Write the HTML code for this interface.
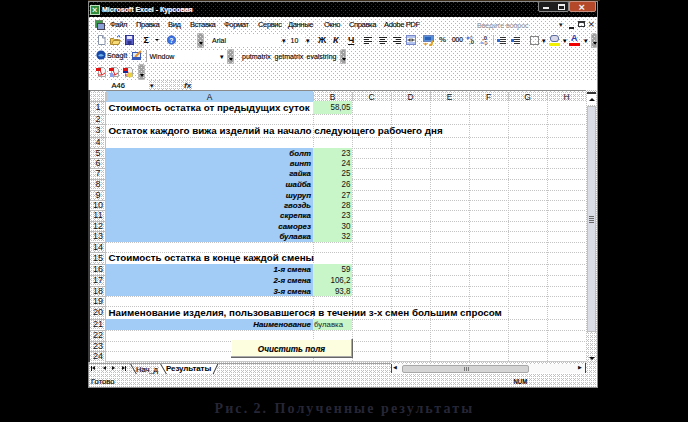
<!DOCTYPE html><html><head><meta charset="utf-8"><style>
html,body{margin:0;padding:0}
body{width:688px;height:422px;background:#000;position:relative;overflow:hidden;font-family:"Liberation Sans",sans-serif}
div{box-sizing:border-box}
.t{position:absolute;white-space:nowrap;line-height:1}
.b{font-weight:bold;font-size:9.8px;color:#000}
.bi{font-weight:bold;font-style:italic;font-size:7.9px;color:#000;-webkit-text-stroke:0.1px #000}
.n{font-size:8px;color:#111;transform:scaleY(1.12);transform-origin:50% 60%}
.m{font-size:7.6px;letter-spacing:-0.4px;color:#000;-webkit-text-stroke:0.1px #000}
.tb{font-size:7px;color:#000;-webkit-text-stroke:0.1px #000}
.grip{position:absolute;width:7px;background:conic-gradient(from 270deg at 1px 1px,#e8e8e8 0 25%,transparent 0) 0px 0px/4px 4px,conic-gradient(from 270deg at 1px 1px,#e8e8e8 0 25%,transparent 0) 2px 2px/4px 4px,#a0a0a0;border:1px solid #b8b8b8;border-radius:2px 2px 1px 1px}.grip:after{content:'';position:absolute;left:1px;bottom:2px;border-left:2px solid transparent;border-right:2px solid transparent;border-top:3px solid #000}
.ds{background:conic-gradient(from 270deg at 1px 1px,#b4b4b4 0 25%,transparent 0) 0px 0px/4px 4px,conic-gradient(from 270deg at 1px 1px,#b4b4b4 0 25%,transparent 0) 2px 2px/4px 4px,#fff}
.dx{background:conic-gradient(from 270deg at 1px 1px,#c0c0c0 0 25%,transparent 0) 0px 0px/4px 4px,conic-gradient(from 270deg at 1px 1px,#c0c0c0 0 25%,transparent 0) 2px 0px/4px 4px,conic-gradient(from 270deg at 1px 1px,#c0c0c0 0 25%,transparent 0) 1px 1px/4px 4px,conic-gradient(from 270deg at 1px 1px,#c0c0c0 0 25%,transparent 0) 0px 2px/4px 4px,conic-gradient(from 270deg at 1px 1px,#c0c0c0 0 25%,transparent 0) 2px 2px/4px 4px,#fff}
.dk{background:conic-gradient(from 270deg at 1px 1px,#3c3c3c 0 25%,transparent 0) 0px 0px/4px 4px,conic-gradient(from 270deg at 1px 1px,#262626 0 25%,transparent 0) 2px 2px/4px 4px,#000}
</style></head><body>
<div style="position:absolute;left:88px;top:0px;width:512px;height:1px;background:#3a2a18"></div>
<div style="position:absolute;left:88px;top:1px;width:510px;height:387px;background:#8c8c8c"></div>
<div class="dk" style="position:absolute;left:89px;top:2px;width:508px;height:15px;"></div>
<div style="position:absolute;left:90px;top:5px;width:10px;height:10px;background:#2f8a3a;border:1px solid #bfe0bf"></div>
<div class="t " style="left:92px;top:5.5px;font-size:9px;font-weight:bold;color:#e8f4e8">×</div>
<div class="t " style="left:102px;top:6px;font-size:7px;font-weight:bold;color:#fff;-webkit-text-stroke:0.2px #fff">Microsoft Excel - Курсовая</div>
<div style="position:absolute;left:538px;top:1px;width:31px;height:11px;background:#1e1e1e;border:1px solid #8a8a8a;border-radius:2px"></div>
<div style="position:absolute;left:543px;top:7px;width:6px;height:2px;background:#eee"></div>
<div style="position:absolute;left:558px;top:4px;width:7px;height:6px;border:1px solid #eee;border-top-width:2px"></div>
<div style="position:absolute;left:569px;top:1px;width:27px;height:11px;background:#b4492a;border:1px solid #c89080;border-radius:2px"></div>
<div class="t " style="left:578.5px;top:1.5px;font-size:11px;font-weight:bold;color:#f4f4f4">×</div>
<div class="ds" style="position:absolute;left:89px;top:17px;width:508px;height:63px;"></div>
<div class="t m" style="left:110px;top:21px;">Файл</div>
<div class="t m" style="left:136px;top:21px;">Правка</div>
<div class="t m" style="left:168px;top:21px;">Вид</div>
<div class="t m" style="left:190px;top:21px;">Вставка</div>
<div class="t m" style="left:224px;top:21px;">Формат</div>
<div class="t m" style="left:258px;top:21px;">Сервис</div>
<div class="t m" style="left:288px;top:21px;">Данные</div>
<div class="t m" style="left:324px;top:21px;">Окно</div>
<div class="t m" style="left:349px;top:21px;">Справка</div>
<div class="t m" style="left:384px;top:21px;">Adobe PDF</div>
<div style="position:absolute;left:95px;top:20px;width:8px;height:8px;background:#3b9a4a;border:1px solid #6a8a6a"></div>
<div style="position:absolute;left:97px;top:23px;width:8px;height:7px;background:#8aa0d8;border:1px solid #445"></div>
<div class="t " style="left:477px;top:21.5px;font-size:7px;color:#8a8a8a">Введите вопрос</div>
<div class="t " style="left:559px;top:21px;font-size:7px;color:#222">▾</div>
<div style="position:absolute;left:569px;top:27px;width:5px;height:2px;background:#222"></div>
<div style="position:absolute;left:578px;top:21px;width:7px;height:6px;border:1px solid #333;border-top-width:2px"></div>
<div class="t " style="left:588px;top:19px;font-size:11px;color:#222">×</div>
<svg style="position:absolute;left:97px;top:35px" width="9" height="10" viewBox="0 0 9 10"><path d="M1.5 0.5h4l2.5 2.5v6.5h-6.5z" fill="#fff" stroke="#8a94a8"/><path d="M5.5 0.5v2.5h2.5" fill="#dde" stroke="#8a94a8"/></svg>
<svg style="position:absolute;left:110px;top:35px" width="11" height="10" viewBox="0 0 11 10"><path d="M0.5 3.5h3l1 1h4v5h-8z" fill="#f0c850" stroke="#b08a30"/><path d="M1.5 9.5l2-4h7l-2 4z" fill="#f8dc78" stroke="#b08a30"/><path d="M7 2l2-1.5 1 2" stroke="#3a6ad8" fill="none"/></svg>
<svg style="position:absolute;left:125px;top:35px" width="9" height="10" viewBox="0 0 9 10"><rect x="0.5" y="0.5" width="8" height="9" fill="#5a60c8" stroke="#30348a"/><rect x="2" y="1" width="5" height="3" fill="#e8e8f8"/><rect x="2.5" y="6" width="4" height="3" fill="#30348a"/></svg>
<div class="t " style="left:143.5px;top:36px;font-size:9px;font-weight:bold;color:#000">Σ</div>
<div style="position:absolute;left:155px;top:39px;width:0px;height:0px;border-left:2px solid transparent;border-right:2px solid transparent;border-top:2px solid #000"></div>
<svg style="position:absolute;left:167px;top:35px" width="9" height="10" viewBox="0 0 9 10"><circle cx="4.5" cy="5" r="4.3" fill="#3a70e0" stroke="#2850b0" stroke-width="0.6"/><text x="4.5" y="8" font-size="7" font-weight="bold" text-anchor="middle" fill="#fff" font-family="Liberation Sans">?</text></svg>
<div class="grip" style="left:197px;top:33px;height:15px"></div>
<div style="position:absolute;left:209px;top:34px;width:72px;height:12px;background:#fff"></div>
<div class="t tb" style="left:212px;top:37px;">Arial</div>
<div class="t tb" style="left:282px;top:37px;">▾</div>
<div style="position:absolute;left:289px;top:34px;width:16px;height:12px;background:#fff"></div>
<div class="t tb" style="left:290.5px;top:37px;">10</div>
<div class="t tb" style="left:306px;top:37px;">▾</div>
<div class="t " style="left:318px;top:35.5px;font-size:9px;font-weight:bold;color:#111">Ж</div>
<div class="t " style="left:333px;top:35.5px;font-size:9px;font-weight:bold;font-style:italic;color:#111">К</div>
<div class="t " style="left:348px;top:35.5px;font-size:9px;font-weight:bold;color:#111;text-decoration:underline">Ч</div>
<div style="position:absolute;left:364px;top:37px;width:8px;height:1px;background:#222"></div>
<div style="position:absolute;left:364px;top:39px;width:5px;height:1px;background:#222"></div>
<div style="position:absolute;left:364px;top:41px;width:8px;height:1px;background:#222"></div>
<div style="position:absolute;left:364px;top:43px;width:5px;height:1px;background:#222"></div>
<div style="position:absolute;left:379px;top:37px;width:8px;height:1px;background:#222"></div>
<div style="position:absolute;left:380px;top:39px;width:5px;height:1px;background:#222"></div>
<div style="position:absolute;left:379px;top:41px;width:8px;height:1px;background:#222"></div>
<div style="position:absolute;left:380px;top:43px;width:5px;height:1px;background:#222"></div>
<div style="position:absolute;left:393px;top:37px;width:8px;height:1px;background:#222"></div>
<div style="position:absolute;left:396px;top:39px;width:5px;height:1px;background:#222"></div>
<div style="position:absolute;left:393px;top:41px;width:8px;height:1px;background:#222"></div>
<div style="position:absolute;left:396px;top:43px;width:5px;height:1px;background:#222"></div>
<svg style="position:absolute;left:406px;top:35px" width="10" height="10" viewBox="0 0 10 10"><rect x="0.5" y="0.5" width="9" height="9" fill="#b4c4f0" stroke="#7888c8"/><rect x="1" y="3" width="8" height="4" fill="#fff"/><path d="M1.5 5h2.5M8.5 5h-2.5" stroke="#111" stroke-width="1.2"/><path d="M4 3.5v3M6 3.5v3" stroke="#111"/></svg>
<svg style="position:absolute;left:423px;top:35px" width="11" height="11" viewBox="0 0 11 11"><rect x="0.5" y="0.5" width="10" height="6" fill="#5a90d8" stroke="#6a80b8"/><rect x="2" y="2" width="6" height="3" fill="#2a60b8"/><path d="M6 10.5q3 0 3-3v-2" stroke="#e0a020" stroke-width="2" fill="none"/><circle cx="2.5" cy="9" r="1.3" fill="#e8a030"/></svg>
<div class="t " style="left:439px;top:36px;font-size:8px;font-weight:bold;color:#333">%</div>
<div class="t " style="left:452px;top:37px;font-size:6.5px;color:#111;-webkit-text-stroke:0.2px #111">000</div>
<svg style="position:absolute;left:466px;top:35px" width="10" height="10" viewBox="0 0 10 10"><text x="3" y="9" font-size="6" font-weight="bold" fill="#333" font-family="Liberation Sans">,0</text><path d="M0.5 3h3M2 1.5v3" stroke="#2a5ad8"/><text x="4" y="4.5" font-size="4.5" fill="#333" font-family="Liberation Sans">0</text></svg>
<svg style="position:absolute;left:480px;top:35px" width="10" height="10" viewBox="0 0 10 10"><text x="2" y="5" font-size="6" font-weight="bold" fill="#333" font-family="Liberation Sans">,0</text><path d="M0.5 8h3" stroke="#2a5ad8"/><text x="4.5" y="9.5" font-size="5" fill="#333" font-family="Liberation Sans">0</text></svg>
<div style="position:absolute;left:493px;top:35px;width:1px;height:11px;background:#bbb"></div>
<div style="position:absolute;left:500px;top:37px;width:6px;height:1px;background:#333"></div>
<div style="position:absolute;left:500px;top:39px;width:6px;height:1px;background:#333"></div>
<div style="position:absolute;left:500px;top:41px;width:6px;height:1px;background:#333"></div>
<div style="position:absolute;left:500px;top:43px;width:6px;height:1px;background:#333"></div>
<div style="position:absolute;left:497px;top:39px;width:3px;height:3px;background:#2a6ad8"></div>
<div style="position:absolute;left:514px;top:37px;width:6px;height:1px;background:#333"></div>
<div style="position:absolute;left:514px;top:39px;width:6px;height:1px;background:#333"></div>
<div style="position:absolute;left:514px;top:41px;width:6px;height:1px;background:#333"></div>
<div style="position:absolute;left:514px;top:43px;width:6px;height:1px;background:#333"></div>
<div style="position:absolute;left:511px;top:39px;width:3px;height:3px;background:#2a6ad8"></div>
<div style="position:absolute;left:530px;top:36px;width:9px;height:9px;border:1px solid #888"></div>
<div class="t tb" style="left:542px;top:37px;">▾</div>
<div style="position:absolute;left:550px;top:35px;width:9px;height:7px;background:#d8d8e8;border:1px solid #5a6a9a;border-radius:3px"></div>
<div style="position:absolute;left:549px;top:43px;width:11px;height:3px;background:#f0f000"></div>
<div class="t tb" style="left:563px;top:37px;">▾</div>
<div class="t " style="left:571px;top:34px;font-size:9px;font-weight:bold;color:#2a3ab0">A</div>
<div style="position:absolute;left:569px;top:43px;width:11px;height:3px;background:#f00000"></div>
<div class="t tb" style="left:584px;top:37px;">▾</div>
<div class="grip" style="left:591px;top:33px;height:15px;width:6px"></div>
<svg style="position:absolute;left:96px;top:50px" width="10" height="10" viewBox="0 0 10 10"><circle cx="5" cy="5" r="4.6" fill="#1a4aa8"/><path d="M2 5.5q3-3 6 0q-3 2-6 0z" fill="#6ab0e8"/></svg>
<div class="t tb" style="left:107px;top:52px;">SnagIt</div>
<svg style="position:absolute;left:132px;top:50px" width="11" height="10" viewBox="0 0 11 10"><rect x="0.5" y="2.5" width="8" height="7" fill="#e8eef8" stroke="#3a5ab8"/><path d="M3 7l6-6" stroke="#e09030" stroke-width="2"/><rect x="1" y="7" width="7" height="2" fill="#3a5ab8"/></svg>
<div style="position:absolute;left:146px;top:50px;width:1px;height:12px;background:#aaa"></div>
<div style="position:absolute;left:147px;top:51px;width:79px;height:12px;background:#fff"></div>
<div class="t " style="left:149.5px;top:53px;font-size:7px;color:#000;-webkit-text-stroke:0.1px #000">Window</div>
<div class="t tb" style="left:220px;top:53px;">▾</div>
<div class="grip" style="left:227px;top:49px;height:15px"></div>
<div class="t tb" style="left:242px;top:53px;">putmatrix</div>
<div class="t tb" style="left:274.5px;top:53px;">getmatrix</div>
<div class="t tb" style="left:306.5px;top:53px;">evalstring</div>
<div class="grip" style="left:340px;top:49px;height:15px;width:6px"></div>
<svg style="position:absolute;left:96px;top:66px" width="11" height="12" viewBox="0 0 11 12">
<path d="M2.5 1.5h5l2 2v7h-7z" fill="#f6f6f6" stroke="#a8a8a8"/>
<rect x="0" y="2" width="5" height="3" fill="#e01010"/>
<path d="M4 4l2 5M6 9l3-2M6 9l-4 0" stroke="#e02020" stroke-width="1" fill="none"/>
</svg>
<svg style="position:absolute;left:109px;top:66px" width="11" height="12" viewBox="0 0 11 12">
<path d="M2.5 1.5h5l2 2v7h-7z" fill="#f6f6f6" stroke="#a8a8a8"/>
<rect x="0" y="2" width="5" height="3" fill="#e01010"/>
<path d="M4 4l2 5M6 9l3-2M6 9l-4 0" stroke="#e02020" stroke-width="1" fill="none"/>
<rect x="1" y="7" width="3" height="4" fill="#8aa0e8"/></svg>
<svg style="position:absolute;left:123px;top:66px" width="11" height="12" viewBox="0 0 11 12">
<path d="M2.5 1.5h5l2 2v7h-7z" fill="#f6f6f6" stroke="#a8a8a8"/>
<rect x="0" y="2" width="5" height="3" fill="#e01010"/>
<path d="M4 4l2 5M6 9l3-2M6 9l-4 0" stroke="#e02020" stroke-width="1" fill="none"/>
<rect x="0" y="5" width="5" height="2" fill="#1a2a9a"/><circle cx="7" cy="9" r="2.5" fill="#e8d040"/></svg>
<div class="grip" style="left:138px;top:64px;height:16px"></div>
<div class="dx" style="position:absolute;left:89px;top:80px;width:508px;height:11px;"></div>
<div style="position:absolute;left:89px;top:80px;width:59px;height:10px;background:#fff"></div>
<div style="position:absolute;left:192px;top:80px;width:405px;height:10px;background:#fff"></div>
<div class="t " style="left:111.5px;top:82px;font-size:7.5px;color:#000;-webkit-text-stroke:0.15px #000">A46</div>
<div class="t " style="left:150px;top:82px;font-size:7px;color:#111">▾</div>
<div class="t " style="left:184px;top:81.5px;font-size:8px;font-weight:bold;color:#222"><i>f</i>x</div>
<div class="dx" style="position:absolute;left:89px;top:90px;width:508px;height:297px;"></div>
<div style="position:absolute;left:106px;top:91px;width:207px;height:11px;background:#a8cff4"></div>
<div style="position:absolute;left:106px;top:102px;width:480px;height:260px;background:#fff"></div>
<div style="position:absolute;left:313px;top:102px;width:1px;height:260px;background:repeating-linear-gradient(180deg,#c4c4c4 0 1px,transparent 1px 2px)"></div>
<div style="position:absolute;left:352px;top:102px;width:1px;height:260px;background:repeating-linear-gradient(180deg,#c4c4c4 0 1px,transparent 1px 2px)"></div>
<div style="position:absolute;left:391px;top:102px;width:1px;height:260px;background:repeating-linear-gradient(180deg,#c4c4c4 0 1px,transparent 1px 2px)"></div>
<div style="position:absolute;left:430px;top:102px;width:1px;height:260px;background:repeating-linear-gradient(180deg,#c4c4c4 0 1px,transparent 1px 2px)"></div>
<div style="position:absolute;left:469px;top:102px;width:1px;height:260px;background:repeating-linear-gradient(180deg,#c4c4c4 0 1px,transparent 1px 2px)"></div>
<div style="position:absolute;left:508px;top:102px;width:1px;height:260px;background:repeating-linear-gradient(180deg,#c4c4c4 0 1px,transparent 1px 2px)"></div>
<div style="position:absolute;left:547px;top:102px;width:1px;height:260px;background:repeating-linear-gradient(180deg,#c4c4c4 0 1px,transparent 1px 2px)"></div>
<div style="position:absolute;left:586px;top:102px;width:1px;height:260px;background:repeating-linear-gradient(180deg,#c4c4c4 0 1px,transparent 1px 2px)"></div>
<div style="position:absolute;left:106px;top:114px;width:480px;height:1px;background:repeating-linear-gradient(90deg,#c4c4c4 0 1px,transparent 1px 2px)"></div>
<div style="position:absolute;left:106px;top:124px;width:480px;height:1px;background:repeating-linear-gradient(90deg,#c4c4c4 0 1px,transparent 1px 2px)"></div>
<div style="position:absolute;left:106px;top:137px;width:480px;height:1px;background:repeating-linear-gradient(90deg,#c4c4c4 0 1px,transparent 1px 2px)"></div>
<div style="position:absolute;left:106px;top:148px;width:480px;height:1px;background:repeating-linear-gradient(90deg,#c4c4c4 0 1px,transparent 1px 2px)"></div>
<div style="position:absolute;left:106px;top:158px;width:480px;height:1px;background:repeating-linear-gradient(90deg,#c4c4c4 0 1px,transparent 1px 2px)"></div>
<div style="position:absolute;left:106px;top:168px;width:480px;height:1px;background:repeating-linear-gradient(90deg,#c4c4c4 0 1px,transparent 1px 2px)"></div>
<div style="position:absolute;left:106px;top:179px;width:480px;height:1px;background:repeating-linear-gradient(90deg,#c4c4c4 0 1px,transparent 1px 2px)"></div>
<div style="position:absolute;left:106px;top:190px;width:480px;height:1px;background:repeating-linear-gradient(90deg,#c4c4c4 0 1px,transparent 1px 2px)"></div>
<div style="position:absolute;left:106px;top:200px;width:480px;height:1px;background:repeating-linear-gradient(90deg,#c4c4c4 0 1px,transparent 1px 2px)"></div>
<div style="position:absolute;left:106px;top:210px;width:480px;height:1px;background:repeating-linear-gradient(90deg,#c4c4c4 0 1px,transparent 1px 2px)"></div>
<div style="position:absolute;left:106px;top:221px;width:480px;height:1px;background:repeating-linear-gradient(90deg,#c4c4c4 0 1px,transparent 1px 2px)"></div>
<div style="position:absolute;left:106px;top:231px;width:480px;height:1px;background:repeating-linear-gradient(90deg,#c4c4c4 0 1px,transparent 1px 2px)"></div>
<div style="position:absolute;left:106px;top:242px;width:480px;height:1px;background:repeating-linear-gradient(90deg,#c4c4c4 0 1px,transparent 1px 2px)"></div>
<div style="position:absolute;left:106px;top:252px;width:480px;height:1px;background:repeating-linear-gradient(90deg,#c4c4c4 0 1px,transparent 1px 2px)"></div>
<div style="position:absolute;left:106px;top:264px;width:480px;height:1px;background:repeating-linear-gradient(90deg,#c4c4c4 0 1px,transparent 1px 2px)"></div>
<div style="position:absolute;left:106px;top:275px;width:480px;height:1px;background:repeating-linear-gradient(90deg,#c4c4c4 0 1px,transparent 1px 2px)"></div>
<div style="position:absolute;left:106px;top:286px;width:480px;height:1px;background:repeating-linear-gradient(90deg,#c4c4c4 0 1px,transparent 1px 2px)"></div>
<div style="position:absolute;left:106px;top:296px;width:480px;height:1px;background:repeating-linear-gradient(90deg,#c4c4c4 0 1px,transparent 1px 2px)"></div>
<div style="position:absolute;left:106px;top:306px;width:480px;height:1px;background:repeating-linear-gradient(90deg,#c4c4c4 0 1px,transparent 1px 2px)"></div>
<div style="position:absolute;left:106px;top:319px;width:480px;height:1px;background:repeating-linear-gradient(90deg,#c4c4c4 0 1px,transparent 1px 2px)"></div>
<div style="position:absolute;left:106px;top:330px;width:480px;height:1px;background:repeating-linear-gradient(90deg,#c4c4c4 0 1px,transparent 1px 2px)"></div>
<div style="position:absolute;left:106px;top:341px;width:480px;height:1px;background:repeating-linear-gradient(90deg,#c4c4c4 0 1px,transparent 1px 2px)"></div>
<div style="position:absolute;left:106px;top:351px;width:480px;height:1px;background:repeating-linear-gradient(90deg,#c4c4c4 0 1px,transparent 1px 2px)"></div>
<div style="position:absolute;left:106px;top:362px;width:480px;height:1px;background:repeating-linear-gradient(90deg,#c4c4c4 0 1px,transparent 1px 2px)"></div>
<div style="position:absolute;left:313px;top:101px;width:39px;height:13px;background:#c8f6c8"></div>
<div style="position:absolute;left:106px;top:148px;width:207px;height:94px;background:#a2cbf6"></div>
<div style="position:absolute;left:313px;top:148px;width:39px;height:94px;background:#c8f6c8"></div>
<div style="position:absolute;left:106px;top:264px;width:207px;height:32px;background:#a2cbf6"></div>
<div style="position:absolute;left:313px;top:264px;width:39px;height:32px;background:#c8f6c8"></div>
<div style="position:absolute;left:106px;top:319px;width:207px;height:11px;background:#a2cbf6"></div>
<div style="position:absolute;left:313px;top:319px;width:39px;height:11px;background:#c8f6c8"></div>
<div style="position:absolute;left:106px;top:92px;width:1px;height:9px;background:#c4c4c4"></div>
<div style="position:absolute;left:313px;top:92px;width:1px;height:9px;background:#c4c4c4"></div>
<div style="position:absolute;left:352px;top:92px;width:1px;height:9px;background:#c4c4c4"></div>
<div style="position:absolute;left:391px;top:92px;width:1px;height:9px;background:#c4c4c4"></div>
<div style="position:absolute;left:430px;top:92px;width:1px;height:9px;background:#c4c4c4"></div>
<div style="position:absolute;left:469px;top:92px;width:1px;height:9px;background:#c4c4c4"></div>
<div style="position:absolute;left:508px;top:92px;width:1px;height:9px;background:#c4c4c4"></div>
<div style="position:absolute;left:547px;top:92px;width:1px;height:9px;background:#c4c4c4"></div>
<div style="position:absolute;left:586px;top:92px;width:1px;height:9px;background:#c4c4c4"></div>
<div style="position:absolute;left:90px;top:101px;width:16px;height:1px;background:#bcbcbc"></div>
<div style="position:absolute;left:90px;top:114px;width:16px;height:1px;background:#bcbcbc"></div>
<div style="position:absolute;left:90px;top:124px;width:16px;height:1px;background:#bcbcbc"></div>
<div style="position:absolute;left:90px;top:137px;width:16px;height:1px;background:#bcbcbc"></div>
<div style="position:absolute;left:90px;top:148px;width:16px;height:1px;background:#bcbcbc"></div>
<div style="position:absolute;left:90px;top:158px;width:16px;height:1px;background:#bcbcbc"></div>
<div style="position:absolute;left:90px;top:168px;width:16px;height:1px;background:#bcbcbc"></div>
<div style="position:absolute;left:90px;top:179px;width:16px;height:1px;background:#bcbcbc"></div>
<div style="position:absolute;left:90px;top:190px;width:16px;height:1px;background:#bcbcbc"></div>
<div style="position:absolute;left:90px;top:200px;width:16px;height:1px;background:#bcbcbc"></div>
<div style="position:absolute;left:90px;top:210px;width:16px;height:1px;background:#bcbcbc"></div>
<div style="position:absolute;left:90px;top:221px;width:16px;height:1px;background:#bcbcbc"></div>
<div style="position:absolute;left:90px;top:231px;width:16px;height:1px;background:#bcbcbc"></div>
<div style="position:absolute;left:90px;top:242px;width:16px;height:1px;background:#bcbcbc"></div>
<div style="position:absolute;left:90px;top:252px;width:16px;height:1px;background:#bcbcbc"></div>
<div style="position:absolute;left:90px;top:264px;width:16px;height:1px;background:#bcbcbc"></div>
<div style="position:absolute;left:90px;top:275px;width:16px;height:1px;background:#bcbcbc"></div>
<div style="position:absolute;left:90px;top:286px;width:16px;height:1px;background:#bcbcbc"></div>
<div style="position:absolute;left:90px;top:296px;width:16px;height:1px;background:#bcbcbc"></div>
<div style="position:absolute;left:90px;top:306px;width:16px;height:1px;background:#bcbcbc"></div>
<div style="position:absolute;left:90px;top:319px;width:16px;height:1px;background:#bcbcbc"></div>
<div style="position:absolute;left:90px;top:330px;width:16px;height:1px;background:#bcbcbc"></div>
<div style="position:absolute;left:90px;top:341px;width:16px;height:1px;background:#bcbcbc"></div>
<div style="position:absolute;left:90px;top:351px;width:16px;height:1px;background:#bcbcbc"></div>
<div style="position:absolute;left:90px;top:362px;width:16px;height:1px;background:#bcbcbc"></div>
<div style="position:absolute;left:89px;top:90px;width:497px;height:1px;background:#8a8a8a"></div>
<div style="position:absolute;left:105px;top:92px;width:1px;height:270px;background:#c0c0c0"></div>
<div style="position:absolute;left:88px;top:90px;width:2px;height:272px;background:#3a3a3a"></div>
<div class="t" style="left:106px;width:207px;top:92.5px;text-align:center;font-size:8.4px;color:#111">A</div>
<div class="t" style="left:313px;width:39px;top:92.5px;text-align:center;font-size:8.4px;color:#111">B</div>
<div class="t" style="left:352px;width:39px;top:92.5px;text-align:center;font-size:8.4px;color:#111">C</div>
<div class="t" style="left:391px;width:39px;top:92.5px;text-align:center;font-size:8.4px;color:#111">D</div>
<div class="t" style="left:430px;width:39px;top:92.5px;text-align:center;font-size:8.4px;color:#111">E</div>
<div class="t" style="left:469px;width:39px;top:92.5px;text-align:center;font-size:8.4px;color:#111">F</div>
<div class="t" style="left:508px;width:39px;top:92.5px;text-align:center;font-size:8.4px;color:#111">G</div>
<div class="t" style="left:547px;width:39px;top:92.5px;text-align:center;font-size:8.4px;color:#111">H</div>
<div class="t" style="left:90px;width:16px;top:103.4px;text-align:center;font-size:9px;color:#111">1</div>
<div class="t" style="left:90px;width:16px;top:114.9px;text-align:center;font-size:9px;color:#111">2</div>
<div class="t" style="left:90px;width:16px;top:126.4px;text-align:center;font-size:9px;color:#111">3</div>
<div class="t" style="left:90px;width:16px;top:138.4px;text-align:center;font-size:9px;color:#111">4</div>
<div class="t" style="left:90px;width:16px;top:148.9px;text-align:center;font-size:9px;color:#111">5</div>
<div class="t" style="left:90px;width:16px;top:158.9px;text-align:center;font-size:9px;color:#111">6</div>
<div class="t" style="left:90px;width:16px;top:169.4px;text-align:center;font-size:9px;color:#111">7</div>
<div class="t" style="left:90px;width:16px;top:180.4px;text-align:center;font-size:9px;color:#111">8</div>
<div class="t" style="left:90px;width:16px;top:190.9px;text-align:center;font-size:9px;color:#111">9</div>
<div class="t" style="left:90px;width:16px;top:200.9px;text-align:center;font-size:9px;color:#111">10</div>
<div class="t" style="left:90px;width:16px;top:211.4px;text-align:center;font-size:9px;color:#111">11</div>
<div class="t" style="left:90px;width:16px;top:221.9px;text-align:center;font-size:9px;color:#111">12</div>
<div class="t" style="left:90px;width:16px;top:232.4px;text-align:center;font-size:9px;color:#111">13</div>
<div class="t" style="left:90px;width:16px;top:242.9px;text-align:center;font-size:9px;color:#111">14</div>
<div class="t" style="left:90px;width:16px;top:253.9px;text-align:center;font-size:9px;color:#111">15</div>
<div class="t" style="left:90px;width:16px;top:265.4px;text-align:center;font-size:9px;color:#111">16</div>
<div class="t" style="left:90px;width:16px;top:276.4px;text-align:center;font-size:9px;color:#111">17</div>
<div class="t" style="left:90px;width:16px;top:286.9px;text-align:center;font-size:9px;color:#111">18</div>
<div class="t" style="left:90px;width:16px;top:296.9px;text-align:center;font-size:9px;color:#111">19</div>
<div class="t" style="left:90px;width:16px;top:308.4px;text-align:center;font-size:9px;color:#111">20</div>
<div class="t" style="left:90px;width:16px;top:320.4px;text-align:center;font-size:9px;color:#111">21</div>
<div class="t" style="left:90px;width:16px;top:331.4px;text-align:center;font-size:9px;color:#111">22</div>
<div class="t" style="left:90px;width:16px;top:341.9px;text-align:center;font-size:9px;color:#111">23</div>
<div class="t" style="left:90px;width:16px;top:352.4px;text-align:center;font-size:9px;color:#111">24</div>
<div class="t b" style="left:108.5px;top:102.6px;">Стоимость остатка от предыдущих суток</div>
<div class="t b" style="left:108.5px;top:125.6px;">Остаток каждого вижа изделий на начало следующего рабочего дня</div>
<div class="t b" style="left:108.5px;top:253.1px;">Стоимость остатка в конце каждой смены</div>
<div class="t b" style="left:108.5px;top:307.6px;">Наименование изделия, пользовавшегося в течении з-х смен большим спросом</div>
<div class="t n" style="right:337.5px;top:104.0px">58,05</div>
<div class="t bi" style="right:377px;top:149.6px">болт</div>
<div class="t n" style="right:337.5px;top:149.5px">23</div>
<div class="t bi" style="right:377px;top:159.6px">винт</div>
<div class="t n" style="right:337.5px;top:159.5px">24</div>
<div class="t bi" style="right:377px;top:170.1px">гайка</div>
<div class="t n" style="right:337.5px;top:170.0px">25</div>
<div class="t bi" style="right:377px;top:181.1px">шайба</div>
<div class="t n" style="right:337.5px;top:181.0px">26</div>
<div class="t bi" style="right:377px;top:191.6px">шуруп</div>
<div class="t n" style="right:337.5px;top:191.5px">27</div>
<div class="t bi" style="right:377px;top:201.6px">гвоздь</div>
<div class="t n" style="right:337.5px;top:201.5px">28</div>
<div class="t bi" style="right:377px;top:212.1px">скрепка</div>
<div class="t n" style="right:337.5px;top:212.0px">23</div>
<div class="t bi" style="right:377px;top:222.6px">саморез</div>
<div class="t n" style="right:337.5px;top:222.5px">30</div>
<div class="t bi" style="right:377px;top:233.1px">булавка</div>
<div class="t n" style="right:337.5px;top:233.0px">32</div>
<div class="t bi" style="right:377px;top:266.1px">1-я смена</div>
<div class="t n" style="right:337.5px;top:266.0px">59</div>
<div class="t bi" style="right:377px;top:277.1px">2-я смена</div>
<div class="t n" style="right:337.5px;top:277.0px">106,2</div>
<div class="t bi" style="right:377px;top:287.6px">3-я смена</div>
<div class="t n" style="right:337.5px;top:287.5px">93,8</div>
<div class="t bi" style="right:377px;top:321.1px">Наименование</div>
<div class="t " style="left:314px;top:320.7px;font-size:7.8px;color:#222">булавка</div>
<div style="position:absolute;left:231px;top:339px;width:122px;height:19px;background:#fdfde0;border-right:1px solid #666;border-bottom:1px solid #666;box-shadow:inset -1px -1px #aaa, inset 1px 1px #fff"></div>
<div class="t bi" style="left:231px;width:121px;top:346px;text-align:center;font-size:8.2px">Очистить поля</div>
<div class="dx" style="position:absolute;left:586px;top:91px;width:11px;height:271px;"></div>
<div style="position:absolute;left:587px;top:92px;width:9px;height:2px;background:#333"></div>
<div style="position:absolute;left:587px;top:95px;width:9px;height:10px;background:#fff"></div>
<div style="position:absolute;left:589px;top:98px;width:0px;height:0px;border-left:3px solid transparent;border-right:3px solid transparent;border-bottom:3px solid #111"></div>
<div style="position:absolute;left:587px;top:106px;width:9px;height:226px;background:#dadce6;border:1px solid #c0c0c0"></div>
<div style="position:absolute;left:589px;top:216px;width:5px;height:1px;background:#666"></div>
<div style="position:absolute;left:589px;top:218px;width:5px;height:1px;background:#666"></div>
<div style="position:absolute;left:589px;top:220px;width:5px;height:1px;background:#666"></div>
<div style="position:absolute;left:589px;top:222px;width:5px;height:1px;background:#666"></div>
<div style="position:absolute;left:589px;top:357px;width:0px;height:0px;border-left:3px solid transparent;border-right:3px solid transparent;border-top:3px solid #111"></div>
<div class="dx" style="position:absolute;left:89px;top:362px;width:508px;height:25px;"></div>
<div style="position:absolute;left:106px;top:361px;width:480px;height:1px;background:#c8c8c8"></div>
<div style="position:absolute;left:89px;top:363px;width:302px;height:1px;background:#a0a0a0"></div>
<div style="position:absolute;left:91px;top:366px;width:1px;height:5px;background:#111"></div>
<div style="position:absolute;left:92px;top:366px;width:0px;height:0px;border-top:2.5px solid transparent;border-bottom:2.5px solid transparent;border-right:3px solid #111"></div>
<div style="position:absolute;left:103px;top:366px;width:0px;height:0px;border-top:2.5px solid transparent;border-bottom:2.5px solid transparent;border-right:3px solid #111"></div>
<div style="position:absolute;left:112px;top:366px;width:0px;height:0px;border-top:2.5px solid transparent;border-bottom:2.5px solid transparent;border-left:3px solid #111"></div>
<div style="position:absolute;left:122px;top:366px;width:0px;height:0px;border-top:2.5px solid transparent;border-bottom:2.5px solid transparent;border-left:3px solid #111"></div>
<div style="position:absolute;left:125px;top:366px;width:1px;height:5px;background:#111"></div>
<div style="position:absolute;left:159px;top:364px;width:58px;height:10px;background:#fff"></div>
<div class="t " style="left:136px;top:365.5px;font-size:7.5px;color:#000;-webkit-text-stroke:0.15px #000">Нач_д</div>
<div class="t " style="left:166px;top:365px;font-size:8px;font-weight:bold;color:#000;letter-spacing:-0.1px">Результаты</div>
<div style="position:absolute;left:133px;top:364px;width:1px;height:10px;background:#333;transform:skewX(30deg)"></div>
<div style="position:absolute;left:163px;top:364px;width:1px;height:10px;background:#333;transform:skewX(30deg)"></div>
<div style="position:absolute;left:215px;top:364px;width:1px;height:10px;background:#333;transform:skewX(-25deg)"></div>
<div style="position:absolute;left:391px;top:364px;width:195px;height:9px;background:#fafafa"></div>
<div style="position:absolute;left:391px;top:364px;width:1px;height:9px;background:#444"></div>
<div class="t " style="left:393px;top:365px;font-size:5px;color:#111">◀</div>
<div style="position:absolute;left:402px;top:365px;width:127px;height:8px;background:#d4d4d4;border:1px solid #a8a8a8;border-radius:2px"></div>
<div style="position:absolute;left:464px;top:367px;width:1px;height:4px;background:#777"></div>
<div style="position:absolute;left:466px;top:367px;width:1px;height:4px;background:#777"></div>
<div style="position:absolute;left:468px;top:367px;width:1px;height:4px;background:#777"></div>
<div class="t " style="left:578px;top:365px;font-size:5px;color:#111">▶</div>
<div style="position:absolute;left:585px;top:363px;width:1px;height:10px;background:#444"></div>
<div class="t " style="left:91px;top:378px;font-size:7.6px;color:#000;-webkit-text-stroke:0.15px #000">Готово</div>
<div class="t " style="left:513.5px;top:379px;font-size:6px;font-weight:bold;color:#000;transform:scaleY(1.15)">NUM</div>
<div class="t " style="left:214.5px;top:402px;font-family:Liberation Serif;font-size:14px;font-weight:bold;color:#262636;letter-spacing:2.1px">Рис.</div>
<div class="t " style="left:253.5px;top:402px;font-family:Liberation Serif;font-size:14px;font-weight:bold;color:#262636;letter-spacing:2.1px">2.</div>
<div class="t " style="left:274.5px;top:402px;font-family:Liberation Serif;font-size:14px;font-weight:bold;color:#262636;letter-spacing:2.1px">Полученные</div>
<div class="t " style="left:381px;top:402px;font-family:Liberation Serif;font-size:14px;font-weight:bold;color:#262636;letter-spacing:2.1px">результаты</div>
</body></html>
